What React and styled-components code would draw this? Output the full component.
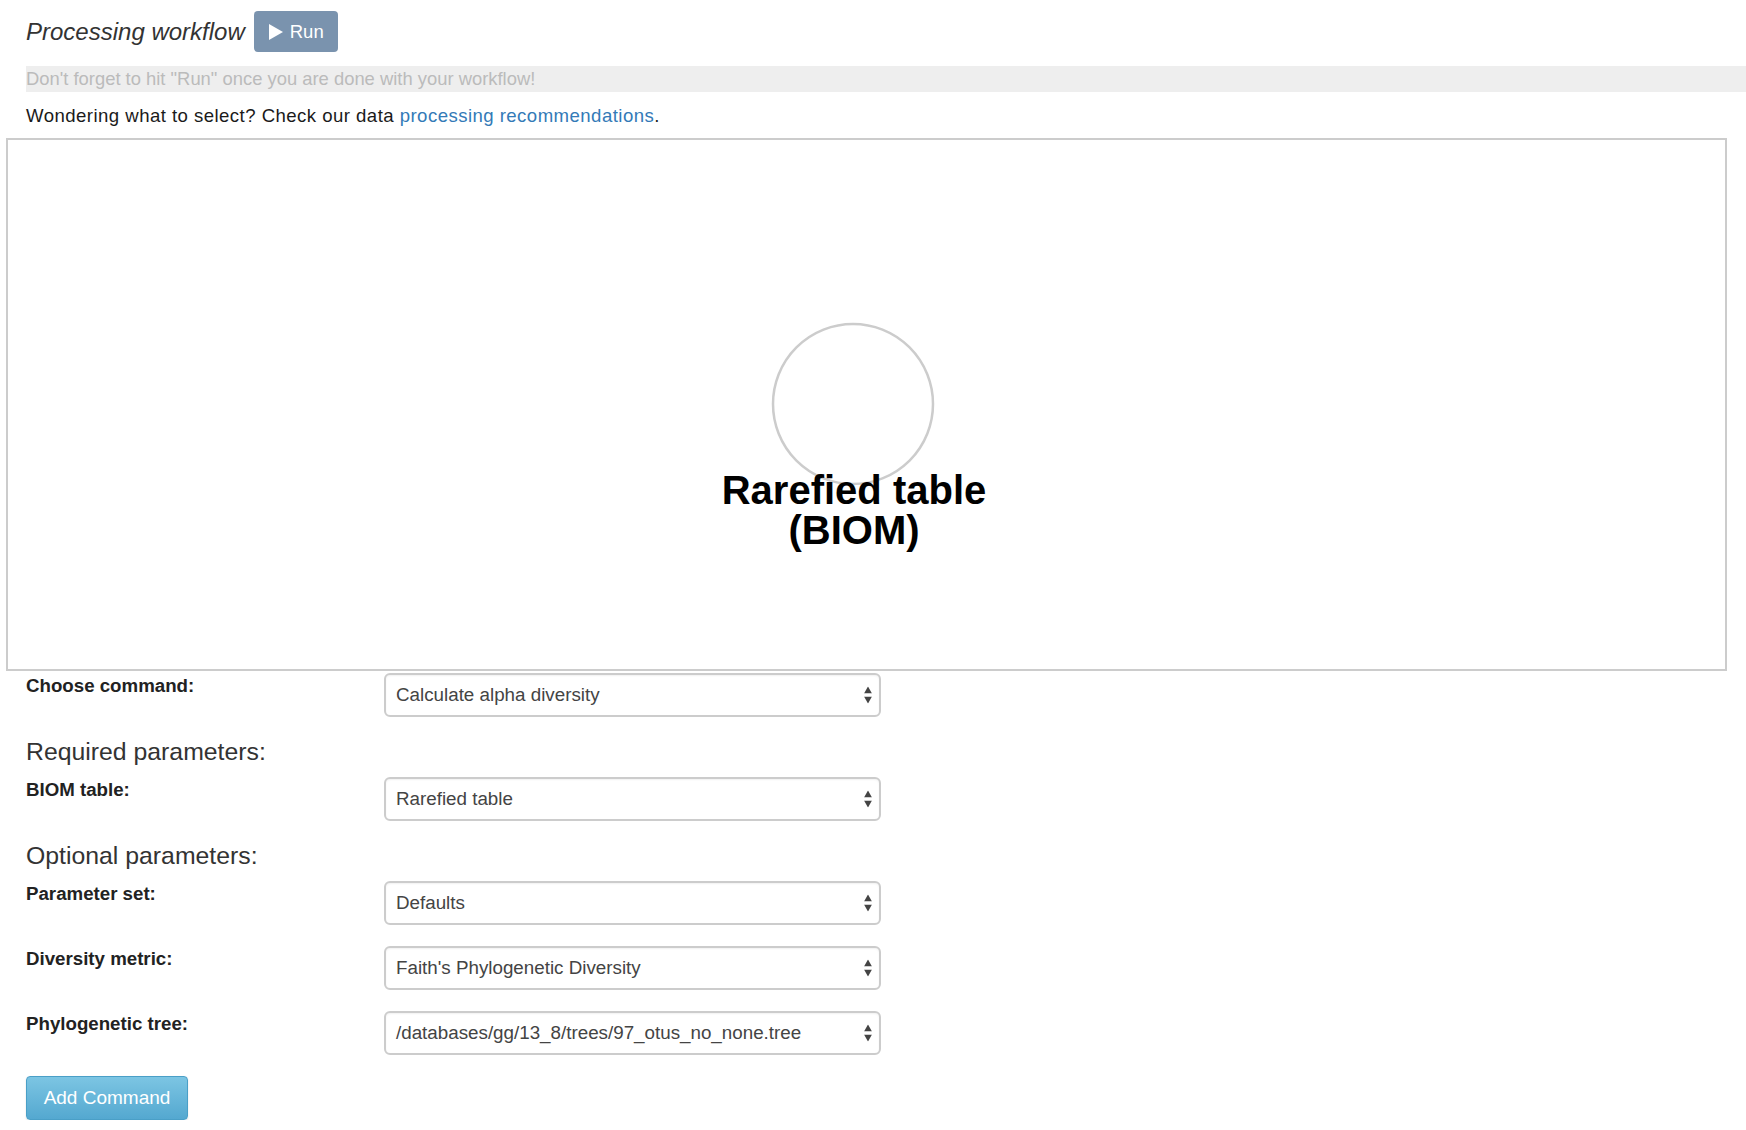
import React from 'react';
import styled, { createGlobalStyle } from 'styled-components';

const GlobalStyle = createGlobalStyle`
  body {
    margin: 0;
    background: #ffffff;
    font-family: "Liberation Sans", Arial, sans-serif;
    color: #333333;
  }
`;

const Page = styled.div`
  padding: 11px 0 0 26px;
`;

const TitleRow = styled.div`
  display: flex;
  align-items: center;
  gap: 9px;
  height: 41px;
`;

const Title = styled.h3`
  margin: 0;
  font-size: 24px;
  font-style: italic;
  font-weight: 400;
  color: #333;
`;

const RunButton = styled.button`
  display: flex;
  align-items: center;
  gap: 7px;
  height: 41px;
  width: 84px;
  padding: 0 0 0 15px;
  border: none;
  border-radius: 4px;
  background: #7a93ae;
  color: #fff;
  font-family: "Liberation Sans", Arial, sans-serif;
  font-size: 18.5px;
`;

const Notice = styled.div`
  margin-top: 14px;
  height: 26px;
  line-height: 26px;
  background: #eeeeee;
  color: #bbbbbb;
  font-size: 18.4px;
`;

const Hint = styled.p`
  margin: 11px 0 0;
  font-size: 18.6px;
  letter-spacing: 0.45px;
  line-height: 26px;
  color: #1a1a1a;

  a {
    color: #337ab7;
    text-decoration: none;
  }
`;

const GraphBox = styled.div`
  margin: 9px 0 0 -20px;
  width: 1721px;
  height: 533px;
  box-sizing: border-box;
  border: 2px solid #cccccc;
  background: #fff;

  svg {
    display: block;
  }
`;

const Form = styled.div`
  padding-top: 2px;
`;

const Row = styled.div`
  display: flex;
  align-items: flex-start;
  margin-bottom: 21px;
`;

const Label = styled.label`
  width: 358px;
  font-size: 18.7px;
  line-height: 25px;
  font-weight: 700;
  color: #222;
`;

const SelectBox = styled.div`
  position: relative;
  width: 497px;
  height: 44px;
  box-sizing: border-box;
  border: 2px solid #cccccc;
  border-radius: 6px;
  box-shadow: inset 0 1px 2px rgba(0, 0, 0, 0.06);
  display: flex;
  align-items: center;
  padding: 0 0 0 10px;
  font-size: 18.8px;
  color: #444;
  background: #fff;
`;

const Arrows = styled.span`
  position: absolute;
  right: 7px;
  top: 50%;
  transform: translateY(-50%);
  display: flex;
  flex-direction: column;
  gap: 3px;

  svg {
    display: block;
  }
`;

const Section = styled.h4`
  margin: 0 0 11px;
  font-size: 24.8px;
  line-height: 28px;
  font-weight: 400;
  color: #333;
`;

const AddButton = styled.button`
  width: 162px;
  height: 44px;
  border: 1px solid #4a9fc7;
  border-radius: 4px;
  background: linear-gradient(#7cc5e3, #54a8d0);
  color: #fff;
  font-family: "Liberation Sans", Arial, sans-serif;
  font-size: 19px;
  box-shadow: 0 1px 2px rgba(0, 0, 0, 0.12);
`;

function Select({ value }) {
  return (
    <SelectBox>
      {value}
      <Arrows>
        <svg width="8" height="7" viewBox="0 0 8 7">
          <path d="M4 0 L8 7 L0 7 Z" fill="#444" />
        </svg>
        <svg width="8" height="7" viewBox="0 0 8 7">
          <path d="M0 0 L8 0 L4 7 Z" fill="#444" />
        </svg>
      </Arrows>
    </SelectBox>
  );
}

function Field({ label, value }) {
  return (
    <Row>
      <Label>{label}</Label>
      <Select value={value} />
    </Row>
  );
}

export default function App() {
  return (
    <>
      <GlobalStyle />
      <Page>
        <TitleRow>
          <Title>Processing workflow</Title>
          <RunButton>
            <svg width="14" height="16" viewBox="0 0 14 16">
              <path d="M0 0 L14 8 L0 16 Z" fill="#fff" />
            </svg>
            Run
          </RunButton>
        </TitleRow>
        <Notice>Don't forget to hit "Run" once you are done with your workflow!</Notice>
        <Hint>
          Wondering what to select? Check our data <a href="#">processing recommendations</a>.
        </Hint>
        <GraphBox>
          <svg width="1717" height="529" viewBox="0 0 1717 529">
            <circle cx="845" cy="264" r="80" fill="#fff" stroke="#cccccc" strokeWidth="2.5" />
            <text
              x="846"
              y="364"
              textAnchor="middle"
              fontFamily="Liberation Sans, Arial, sans-serif"
              fontWeight="700"
              fontSize="40"
              fill="#000"
            >
              Rarefied table
            </text>
            <text
              x="846"
              y="404"
              textAnchor="middle"
              fontFamily="Liberation Sans, Arial, sans-serif"
              fontWeight="700"
              fontSize="40"
              fill="#000"
            >
              (BIOM)
            </text>
          </svg>
        </GraphBox>
        <Form>
          <Field label="Choose command:" value="Calculate alpha diversity" />
          <Section>Required parameters:</Section>
          <Field label="BIOM table:" value="Rarefied table" />
          <Section>Optional parameters:</Section>
          <Field label="Parameter set:" value="Defaults" />
          <Field label="Diversity metric:" value="Faith's Phylogenetic Diversity" />
          <Field label="Phylogenetic tree:" value="/databases/gg/13_8/trees/97_otus_no_none.tree" />
          <AddButton>Add Command</AddButton>
        </Form>
      </Page>
    </>
  );
}
